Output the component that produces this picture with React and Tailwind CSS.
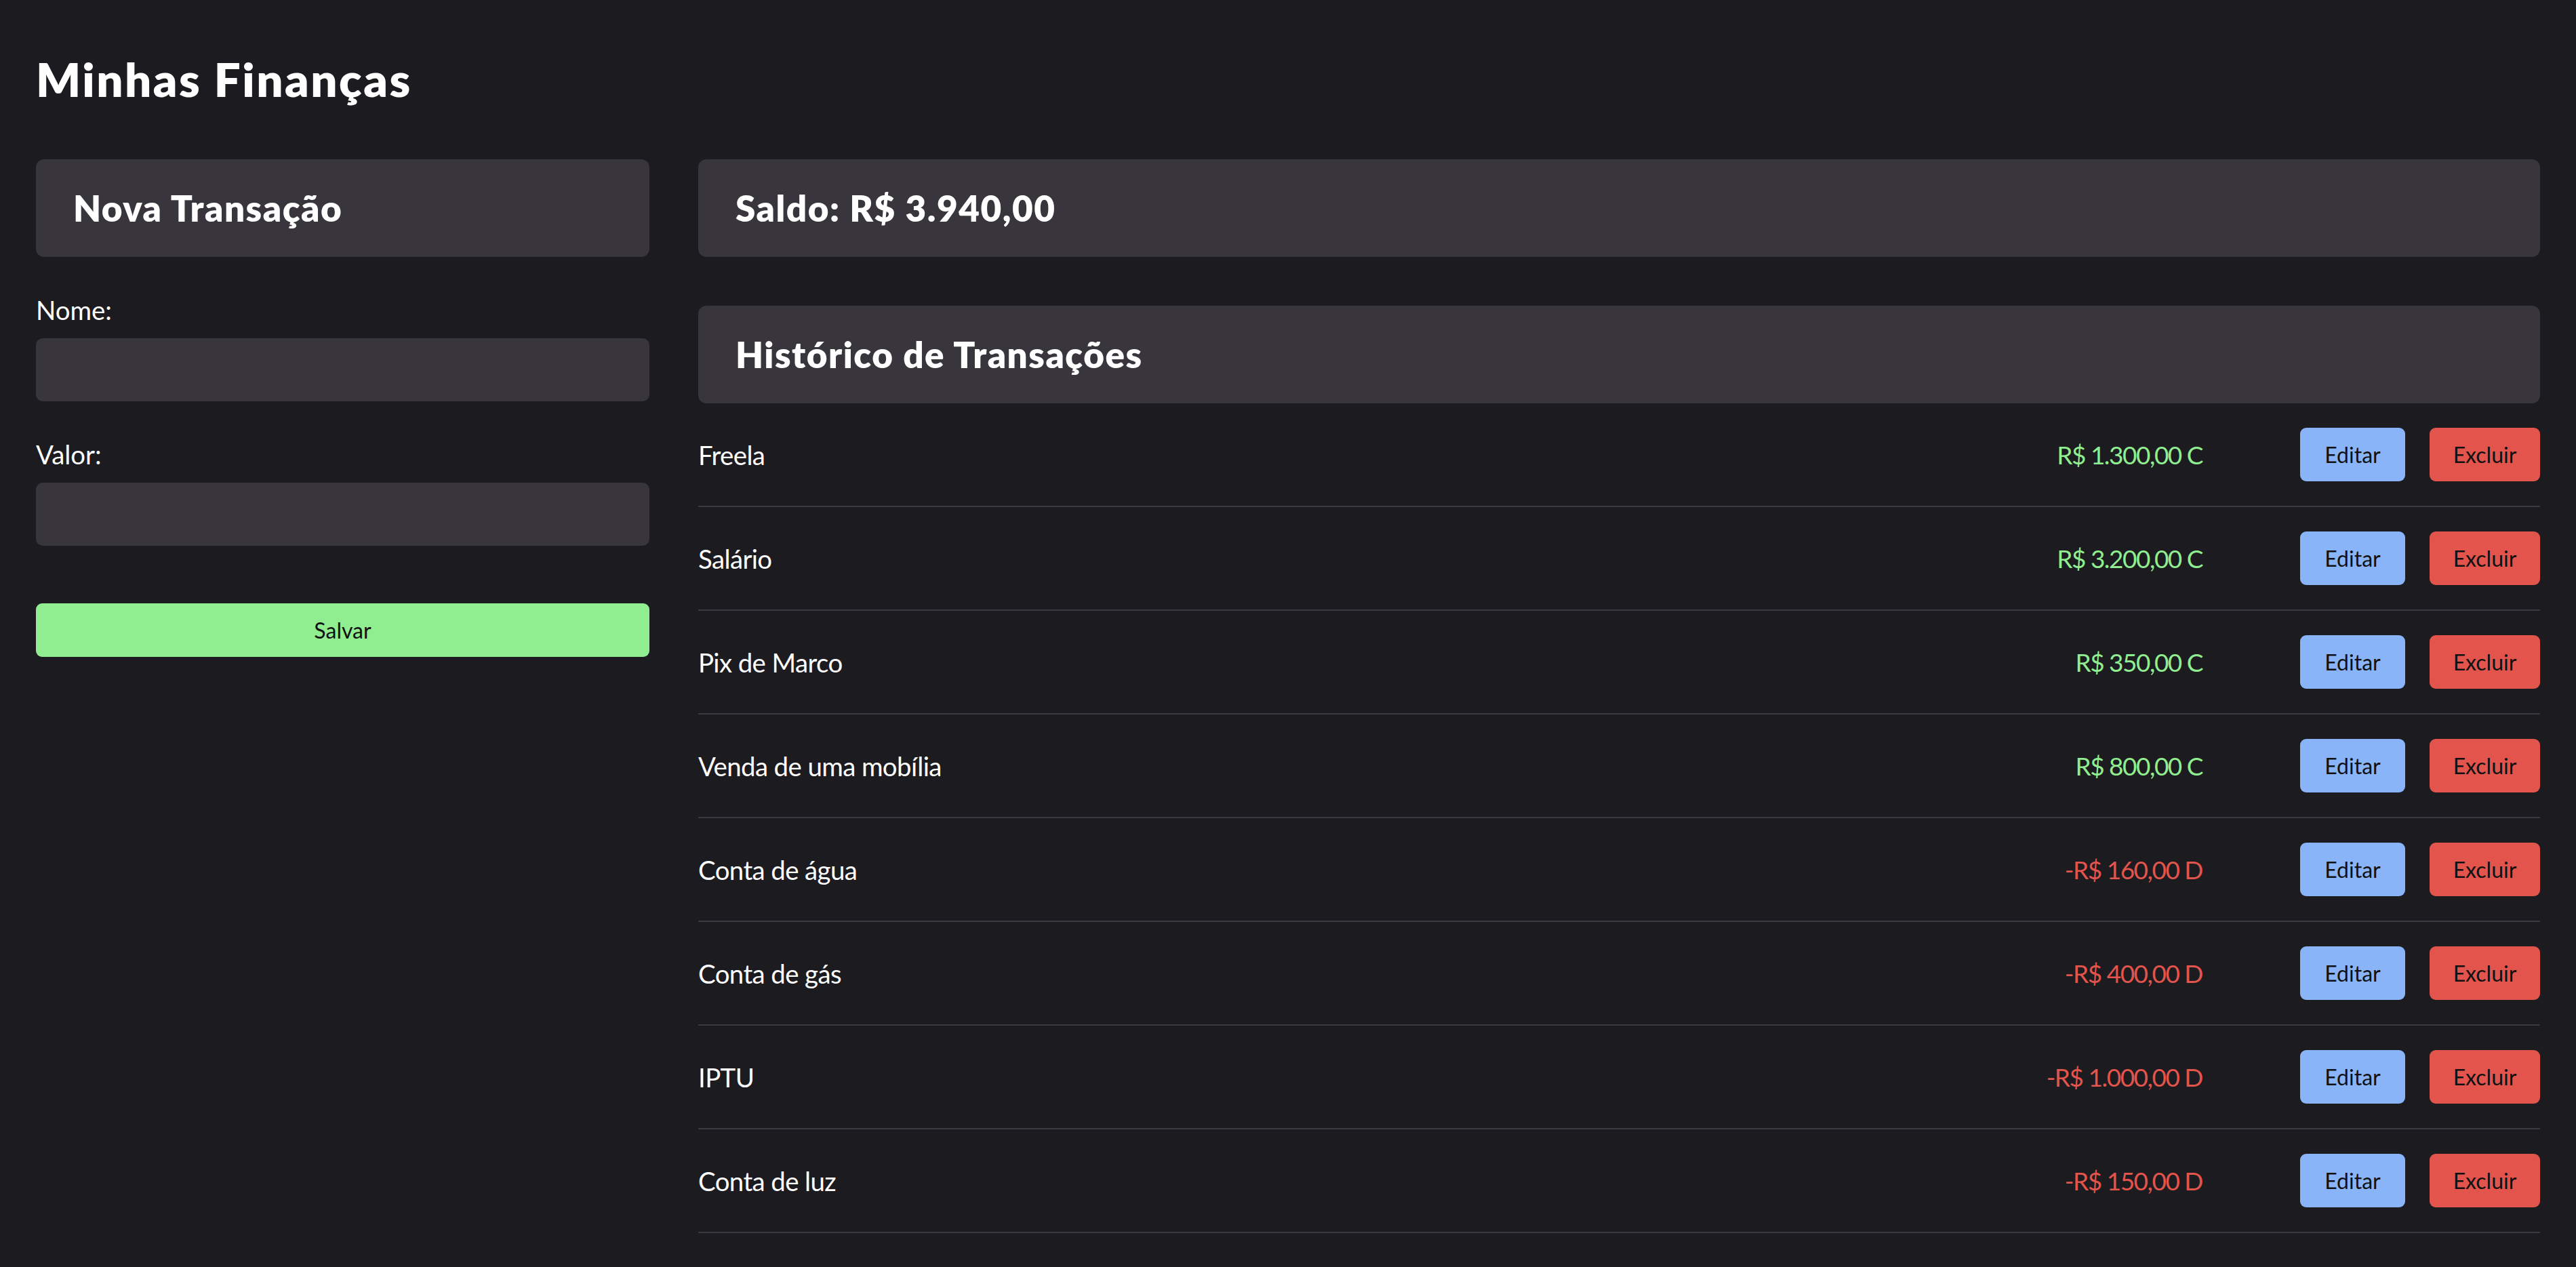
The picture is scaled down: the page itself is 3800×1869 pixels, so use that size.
const transacoes = [
  { nome: 'Freela', valor: 'R$ 1.300,00 C', credito: true },
  { nome: 'Salário', valor: 'R$ 3.200,00 C', credito: true },
  { nome: 'Pix de Marco', valor: 'R$ 350,00 C', credito: true },
  { nome: 'Venda de uma mobília', valor: 'R$ 800,00 C', credito: true },
  { nome: 'Conta de água', valor: '-R$ 160,00 D', credito: false },
  { nome: 'Conta de gás', valor: '-R$ 400,00 D', credito: false },
  { nome: 'IPTU', valor: '-R$ 1.000,00 D', credito: false },
  { nome: 'Conta de luz', valor: '-R$ 150,00 D', credito: false },
]

function Painel({ children }) {
  return (
    <div className="h-[144px] rounded-[12px] bg-[#38363c] px-[55px] flex items-center">
      <h2 className="text-[53px] font-extrabold leading-[1.2] tracking-[1.5px]">{children}</h2>
    </div>
  )
}

function Campo({ label }) {
  return (
    <div className="mt-[55px]">
      <label className="block text-[38.4px] leading-[46px]">{label}</label>
      <input className="mt-[19px] block w-full h-[93px] rounded-[10px] bg-[#38363c] outline-none px-4 text-[38.4px] text-white" />
    </div>
  )
}

export default function App() {
  return (
    <div className="min-h-screen bg-[#1c1b1f] px-[53px] pt-[82px] pb-[40px] text-white font-['Lato',sans-serif]">
      <h1 className="text-[69px] leading-[69px] font-extrabold tracking-[2.5px]">Minhas Finanças</h1>

      <div className="mt-[84px] grid grid-cols-[905px_1fr] gap-[72px] items-start">
        <section>
          <Painel>Nova Transação</Painel>
          <form onSubmit={(e) => e.preventDefault()}>
            <Campo label="Nome:" />
            <Campo label="Valor:" />
            <button className="mt-[85px] w-full h-[79px] rounded-[9px] bg-[#90ee90] text-[32px] text-[#111]">
              Salvar
            </button>
          </form>
        </section>

        <section>
          <Painel>Saldo: R$ 3.940,00</Painel>
          <div className="mt-[72px]">
            <Painel>Histórico de Transações</Painel>
          </div>
          <ul>
            {transacoes.map((t) => (
              <li
                key={t.nome}
                className="flex items-center py-[36px] border-b-2 border-[#3a393f]"
              >
                <span className="flex-1 text-[38.4px] leading-[46px] tracking-[-0.6px]">{t.nome}</span>
                <span
                  className={
                    t.credito
                      ? 'mr-[144px] text-[37px] leading-[46px] tracking-[-1.5px] text-[#90ee90]'
                      : 'mr-[144px] text-[37px] leading-[46px] tracking-[-1.5px] text-[#e2544c]'
                  }
                >
                  {t.valor}
                </span>
                <button className="w-[155px] h-[79px] rounded-[9px] bg-[#8ab4f8] text-[32px] text-[#111]">
                  Editar
                </button>
                <button className="ml-[36px] w-[163px] h-[79px] rounded-[9px] bg-[#e2544c] text-[32px] text-[#111]">
                  Excluir
                </button>
              </li>
            ))}
          </ul>
        </section>
      </div>
    </div>
  )
}
